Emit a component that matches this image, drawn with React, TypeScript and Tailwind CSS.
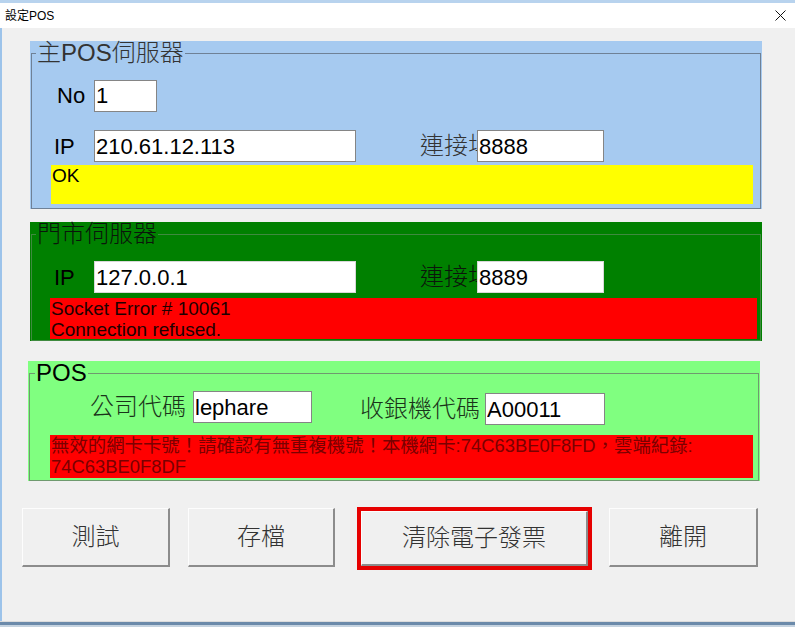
import React from "react";

const font = "font-['Liberation_Sans','Noto_Sans_CJK_TC',sans-serif]";

const inputCls =
  "relative h-[32px] bg-white border border-[#858585] px-[1px] text-[22px] text-black outline-none font-['Liberation_Sans','Noto_Sans_CJK_TC',sans-serif]";

const Btn = ({ label, size }: { label: string; size: string }) => (
  <button
    className={
      "bg-[#f0f0f0] border-t border-l border-[#fdfdfd] border-r-2 border-b-2 border-r-[#8c8c8c] border-b-[#8c8c8c] text-[24px] text-[#333] font-light " +
      size
    }
  >
    {label}
  </button>
);

export default function App() {
  return (
    <div className={"w-[795px] h-[627px] overflow-hidden flex flex-col bg-white " + font}>
      {/* title bar */}
      <div className="h-[28px] shrink-0 border-t-[3px] border-[#b8d3ee] bg-white flex items-center justify-between pl-[5px] pr-[8px]">
        <span className="text-[12px] text-black">設定POS</span>
        <svg width="11" height="11" viewBox="0 0 11 11" className="mr-[1px]">
          <path d="M0.5 0.5 L10.5 10.5 M10.5 0.5 L0.5 10.5" stroke="#111" strokeWidth="1" />
        </svg>
      </div>

      {/* body */}
      <div className="flex-1 flex flex-col bg-[#f0f0f0] border-l-2 border-[#9cc3ea]">
        {/* 主POS伺服器 */}
        <div className="ml-[28px] mt-[13px] w-[732px] h-[168px] bg-[#a6caf0] flex">
          <fieldset className="mx-[1px] flex-1 border border-[#6f8196] flex flex-col">
            <legend className="ml-[4px] px-[1px] text-[24px] leading-[24px] text-[#333] font-light">
              主POS伺服器
            </legend>
            <div className="mt-[14px] flex items-center">
              <span className="ml-[25px] w-[37px] text-[22px] text-black">No</span>
              <input className={inputCls + " w-[63px]"} value="1" readOnly />
            </div>
            <div className="mt-[16px] flex items-center">
              <span className="ml-[22px] w-[40px] text-[22px] text-black">IP</span>
              <input className={inputCls + " w-[262px]"} value="210.61.12.113" readOnly />
              <span className="ml-[64px] w-[57px] whitespace-nowrap text-[24px] text-[#333] font-light">
                連接埠
              </span>
              <input className={inputCls + " w-[127px]"} value="8888" readOnly />
            </div>
            <div className="mt-[1px] ml-[19px] w-[702px] h-[39px] bg-[#ffff00] pl-[1px] text-[19px] leading-[21px] text-black">
              OK
            </div>
          </fieldset>
        </div>

        {/* 門市伺服器 */}
        <div className="ml-[28px] mt-[13px] w-[732px] h-[119px] bg-[#008000] flex">
          <fieldset className="mx-[1px] flex-1 border border-[#3f8a3f] flex flex-col">
            <legend className="ml-[4px] px-[1px] text-[24px] leading-[24px] text-[#0b160b] font-light">
              門市伺服器
            </legend>
            <div className="mt-[13px] flex items-center">
              <span className="ml-[22px] w-[40px] text-[22px] text-black">IP</span>
              <input className={inputCls + " w-[262px] h-[31px] border-[#d8d8d8]"} value="127.0.0.1" readOnly />
              <span className="ml-[64px] w-[57px] whitespace-nowrap text-[24px] text-[#0b160b] font-light">
                連接埠
              </span>
              <input className={inputCls + " w-[127px] h-[31px] border-[#d8d8d8]"} value="8889" readOnly />
            </div>
            <div className="mt-[3px] ml-[18px] w-[707px] h-[41px] bg-[#ff0000] pl-[1px] text-[19px] leading-[21px] text-[#1e0000]">
              Socket Error # 10061
              <br />
              Connection refused.
            </div>
          </fieldset>
        </div>

        {/* POS */}
        <div className="ml-[26px] mt-[20px] w-[732px] h-[120px] bg-[#80ff80] flex">
          <fieldset className="mx-[1px] flex-1 border border-[#6f9a6f] flex flex-col">
            <legend className="ml-[5px] px-[1px] text-[24px] leading-[24px] text-black">POS</legend>
            <div className="mt-[6px] flex items-start">
              <span className="ml-[60px] w-[103px] text-[24px] leading-[32px] text-[#1a331a] font-light">
                公司代碼
              </span>
              <input className={inputCls + " w-[119px]"} value="lephare" readOnly />
              <span className="ml-[48px] w-[125px] mt-[2px] text-[24px] leading-[32px] text-[#1a331a] font-light">
                收銀機代碼
              </span>
              <input className={inputCls + " w-[120px] mt-[2px]"} value="A00011" readOnly />
            </div>
            <div className="mt-[10px] ml-[20px] w-[703px] h-[43px] bg-[#ff0000] pl-[1px] text-[18.4px] leading-[21px] text-[#7a0000] whitespace-nowrap">
              無效的網卡卡號！請確認有無重複機號！本機網卡:74C63BE0F8FD，雲端紀錄:
              <br />
              74C63BE0F8DF
            </div>
          </fieldset>
        </div>

        {/* buttons */}
        <div className="ml-[20px] mt-[27px] flex items-start">
          <Btn label="測試" size="w-[148px] h-[59px]" />
          <div className="ml-[18px]">
            <Btn label="存檔" size="w-[147px] h-[59px]" />
          </div>
          <div className="ml-[22px] -mt-[1px] w-[235px] h-[63px] border-4 border-[#e60000] flex">
            <Btn label="清除電子發票" size="w-full h-full" />
          </div>
          <div className="ml-[17px]">
            <Btn label="離開" size="w-[149px] h-[59px]" />
          </div>
        </div>
      </div>

      {/* bottom frame */}
      <div className="h-[6px] shrink-0 border-t border-[#dcdcdc] bg-[#6b8aaa] border-b-2 border-b-[#c5d3e0]" />
    </div>
  );
}
